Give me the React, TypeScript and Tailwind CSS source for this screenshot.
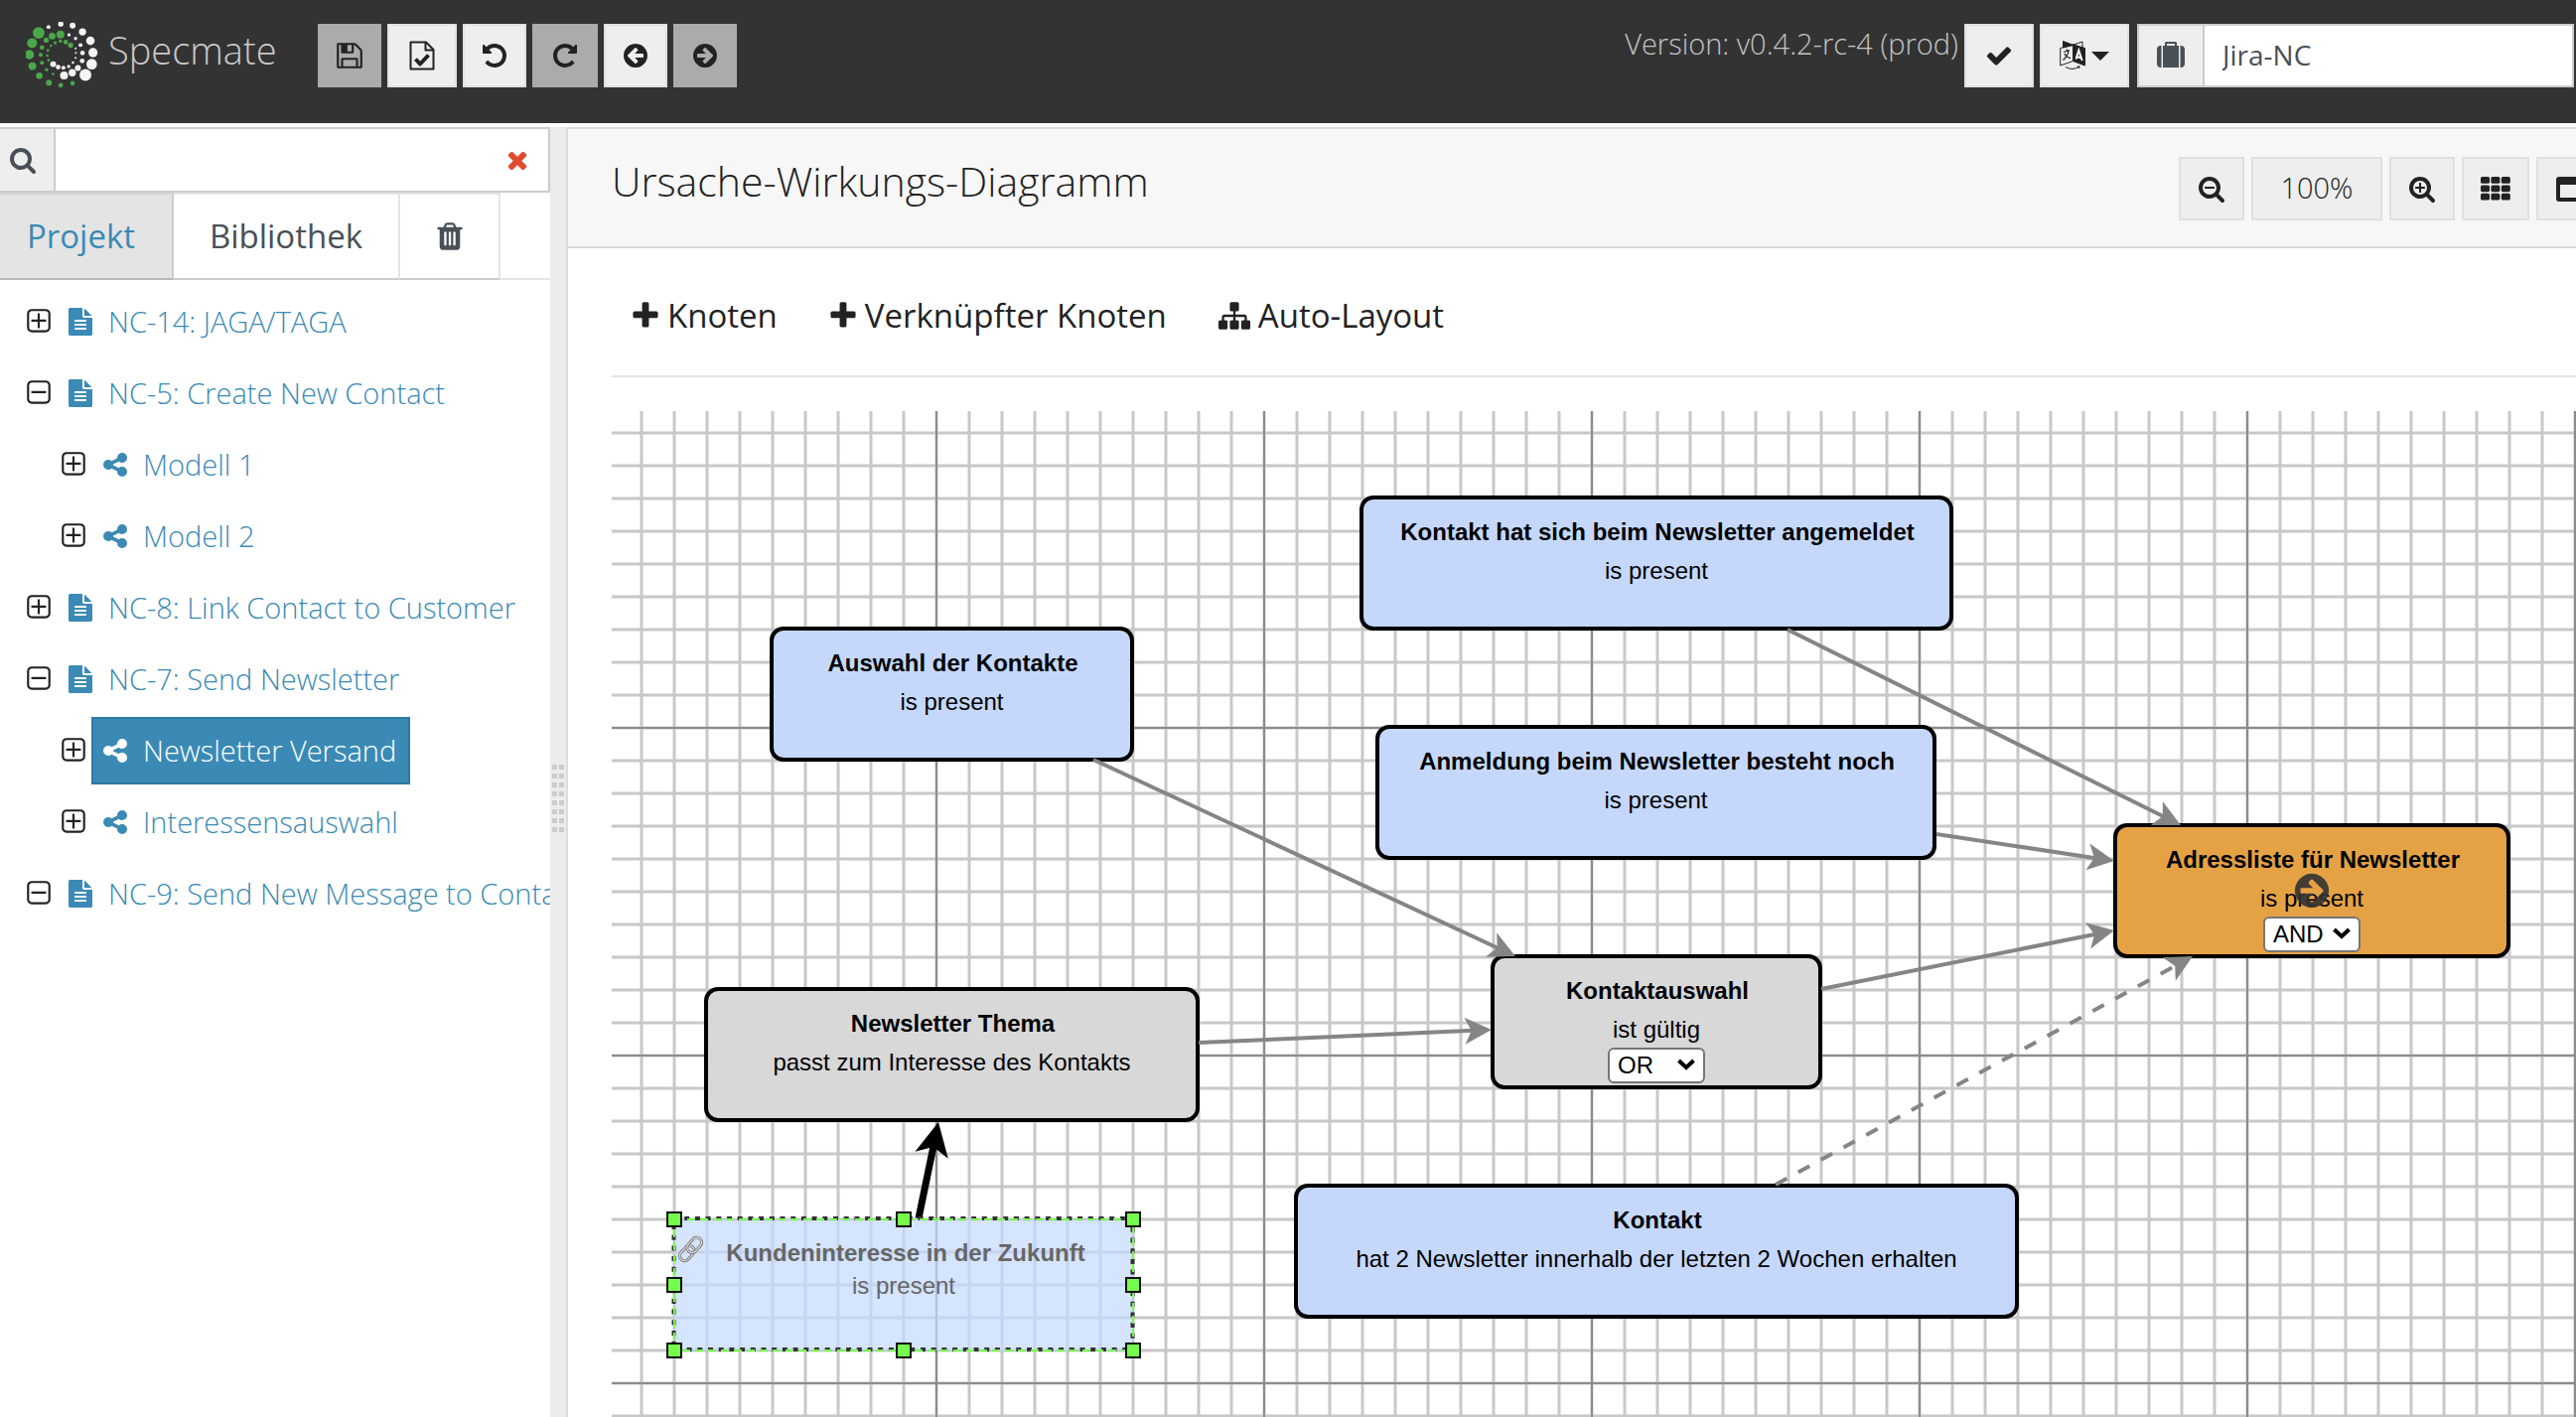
import React from "react";

const ICONS = {
  search:
    "M1216 832q0-185-131.5-316.5t-316.5-131.5-316.5 131.5-131.5 316.5 131.5 316.5 316.5 131.5 316.5-131.5 131.5-316.5zm512 832q0 52-38 90t-90 38q-54 0-90-38l-343-342q-179 124-399 124-143 0-273.5-55.5t-225-150-150-225-55.5-273.5 55.5-273.5 150-225 225-150 273.5-55.5 273.5 55.5 225 150 150 225 55.5 273.5q0 220-124 399l343 343q37 37 37 90z",
  minusBar:
    "M1088 800v64q0 13-9.5 22.5t-22.5 9.5h-576q-13 0-22.5-9.5t-9.5-22.5v-64q0-13 9.5-22.5t22.5-9.5h576q13 0 22.5 9.5t9.5 22.5z",
  plusBar:
    "M1088 800v64q0 13-9.5 22.5t-22.5 9.5h-224v224q0 13-9.5 22.5t-22.5 9.5h-64q-13 0-22.5-9.5t-9.5-22.5v-224h-224q-13 0-22.5-9.5t-9.5-22.5v-64q0-13 9.5-22.5t22.5-9.5h224v-224q0-13 9.5-22.5t22.5-9.5h64q13 0 22.5 9.5t9.5 22.5v224h224q13 0 22.5 9.5t9.5 22.5z",
  plus: "M1600 736v192q0 40-28 68t-68 28h-416v416q0 40-28 68t-68 28h-192q-40 0-68-28t-28-68v-416h-416q-40 0-68-28t-28-68v-192q0-40 28-68t68-28h416v-416q0-40 28-68t68-28h192q40 0 68 28t28 68v416h416q40 0 68 28t28 68z",
  check:
    "M1671 566q0 40-28 68l-724 724-136 136q-28 28-68 28t-68-28l-136-136-362-362q-28-28-28-68t28-68l136-136q28-28 68-28t68 28l294 295 656-657q28-28 68-28t68 28l136 136q28 28 28 68z",
  undo: "M1664 896q0 156-61 298t-164 245-245 164-298 61q-172 0-327-72.5t-264-204.5q-7-10-6.5-22.5t8.5-20.5l137-138q10-9 25-9 16 2 23 12 73 95 179 147t225 52q104 0 198.5-40.5t163.5-109.5 109.5-163.5 40.5-198.5-40.5-198.5-109.5-163.5-163.5-109.5-198.5-40.5q-98 0-188 35.5t-160 101.5l137 138q31 30 14 69-17 40-59 40h-448q-26 0-45-19t-19-45v-448q0-42 40-59 39-17 69 14l130 129q107-101 244.5-156.5t284.5-55.5q156 0 298 61t245 164 164 245 61 298z",
  redo: "M1664 256v448q0 26-19 45t-45 19h-448q-42 0-59-40-17-39 14-69l138-138q-148-137-349-137-104 0-198.5 40.5t-163.5 109.5-109.5 163.5-40.5 198.5 40.5 198.5 109.5 163.5 163.5 109.5 198.5 40.5q119 0 225-52t179-147q7-10 23-12 15 0 25 9l137 138q9 8 9.5 20.5t-7.5 22.5q-109 132-264 204.5t-327 72.5q-156 0-298-61t-245-164-164-245-61-298 61-298 164-245 245-164 298-61q147 0 284.5 55.5t244.5 156.5l130-129q29-31 70-14 39 17 39 59z",
  circleRight:
    "M1413 896q0-27-18-45l-91-91-362-362q-18-18-45-18t-45 18l-91 91q-18 18-18 45t18 45l189 189h-502q-26 0-45 19t-19 45v128q0 26 19 45t45 19h502l-189 189q-19 19-19 45t19 45l91 91q18 18 45 18t45-18l362-362 91-91q18-18 18-45zm251 0q0 209-103 385.5t-279.5 279.5-385.5 103-385.5-103-279.5-279.5-103-385.5 103-385.5 279.5-279.5 385.5-103 385.5 103 279.5 279.5 103 385.5z",
  squareFrame:
    "M1472 1248v-832q0-66-47-113t-113-47h-832q-66 0-113 47t-47 113v832q0 66 47 113t113 47h832q66 0 113-47t47-113zm128-832v832q0 119-84.5 203.5t-203.5 84.5h-832q-119 0-203.5-84.5t-84.5-203.5v-832q0-119 84.5-203.5t203.5-84.5h832q119 0 203.5 84.5t84.5 203.5z",
  squarePlus:
    "M1344 800v64q0 14-9 23t-23 9h-352v352q0 14-9 23t-23 9h-64q-14 0-23-9t-9-23v-352h-352q-14 0-23-9t-9-23v-64q0-14 9-23t23-9h352v-352q0-14 9-23t23-9h64q14 0 23 9t9 23v352h352q14 0 23 9t9 23z",
  squareMinus:
    "M1344 800v64q0 14-9 23t-23 9h-832q-14 0-23-9t-9-23v-64q0-14 9-23t23-9h832q14 0 23 9t9 23z",
  share:
    "M1344 1024q133 0 226.5 93.5t93.5 226.5-93.5 226.5-226.5 93.5-226.5-93.5-93.5-226.5q0-12 2-34l-360-180q-92 86-218 86-133 0-226.5-93.5t-93.5-226.5 93.5-226.5 226.5-93.5q126 0 218 86l360-180q-2-22-2-34 0-133 93.5-226.5t226.5-93.5 226.5 93.5 93.5 226.5-93.5 226.5-226.5 93.5q-126 0-218-86l-360 180q2 22 2 34t-2 34l360 180q92-86 218-86z",
  trash:
    "M704 1376v-704q0-14-9-23t-23-9h-64q-14 0-23 9t-9 23v704q0 14 9 23t23 9h64q14 0 23-9t9-23zm256 0v-704q0-14-9-23t-23-9h-64q-14 0-23 9t-9 23v704q0 14 9 23t23 9h64q14 0 23-9t9-23zm256 0v-704q0-14-9-23t-23-9h-64q-14 0-23 9t-9 23v704q0 14 9 23t23 9h64q14 0 23-9t9-23zm-544-992h448l-48-117q-7-9-17-11h-317q-10 2-17 11zm928 32v64q0 14-9 23t-23 9h-96v948q0 83-47 143.5t-113 60.5h-832q-66 0-113-58.5t-47-141.5v-952h-96q-14 0-23-9t-9-23v-64q0-14 9-23t23-9h309l70-167q15-37 54-63t79-26h320q40 0 79 26t54 63l70 167h309q14 0 23 9t9 23z",
  file: "M1596 476q14 14 28 36h-472v-472q22 14 36 28zm-476 164h544v1056q0 40-28 68t-68 28h-1344q-40 0-68-28t-28-68v-1600q0-40 28-68t68-28h800v544q0 40 28 68t68 28zm160 736v-64q0-14-9-23t-23-9h-704q-14 0-23 9t-9 23v64q0 14 9 23t23 9h704q14 0 23-9t9-23zm0-256v-64q0-14-9-23t-23-9h-704q-14 0-23 9t-9 23v64q0 14 9 23t23 9h704q14 0 23-9t9-23zm0-256v-64q0-14-9-23t-23-9h-704q-14 0-23 9t-9 23v64q0 14 9 23t23 9h704q14 0 23-9t9-23z",
  save: "M512 1536h768v-384h-768v384zm896 0h128v-896q0-14-10-38.5t-20-34.5l-281-281q-10-10-34-20t-39-10v416q0 40-28 68t-68 28h-576q-40 0-68-28t-28-68v-416h-128v1280h128v-416q0-40 28-68t68-28h832q40 0 68 28t28 68v416zm-384-928v-320q0-13-9.5-22.5t-22.5-9.5h-192q-13 0-22.5 9.5t-9.5 22.5v320q0 13 9.5 22.5t22.5 9.5h192q13 0 22.5-9.5t9.5-22.5zm640 32v928q0 40-28 68t-68 28h-1344q-40 0-68-28t-28-68v-1344q0-40 28-68t68-28h928q40 0 88 20t76 48l280 280q28 28 48 76t20 88z",
  sitemap:
    "M1792 1248v320q0 40-28 68t-68 28h-320q-40 0-68-28t-28-68v-320q0-40 28-68t68-28h96v-192h-512v192h96q40 0 68 28t28 68v320q0 40-28 68t-68 28h-320q-40 0-68-28t-28-68v-320q0-40 28-68t68-28h96v-192h-512v192h96q40 0 68 28t28 68v320q0 40-28 68t-68 28h-320q-40 0-68-28t-28-68v-320q0-40 28-68t68-28h96v-192q0-52 38-90t90-38h512v-192h-96q-40 0-68-28t-28-68v-320q0-40 28-68t68-28h320q40 0 68 28t28 68v320q0 40-28 68t-68 28h-96v192h512q52 0 90 38t38 90v192h96q40 0 68 28t28 68z",
  suitcase:
    "M640 256h512v-128h-512v128zm-352 0v1408h-64q-92 0-158-66t-66-158v-960q0-92 66-158t158-66h64zm1120 0v1408h-1024v-1408h128v-160q0-40 28-68t68-28h576q40 0 68 28t28 68v160h128zm384 224v960q0 92-66 158t-158 66h-64v-1408h64q92 0 158 66t66 158z",
  close:
    "M1490 1322q0 40-28 68l-136 136q-28 28-68 28t-68-28l-294-294-294 294q-28 28-68 28t-68-28l-136-136q-28-28-28-68t28-68l294-294-294-294q-28-28-28-68t28-68l136-136q28-28 68-28t68 28l294 294 294-294q28-28 68-28t68 28l136 136q28 28 28 68t-28 68l-294 294 294 294q28 28 28 68z",
};

type IconName = keyof typeof ICONS;

function Icon({ parts, className = "size-7", flip = false }: { parts: IconName[]; className?: string; flip?: boolean }) {
  return (
    <svg viewBox="0 0 1792 1792" className={`shrink-0 ${className}`} fill="currentColor" aria-hidden="true">
      <g transform={flip ? "translate(1792 0) scale(-1 1)" : undefined}>
        {parts.map((p) => (
          <path key={p} d={ICONS[p]} />
        ))}
      </g>
    </svg>
  );
}

function GridIcon() {
  return (
    <svg viewBox="0 0 30 24" className="h-6 w-[30px]" fill="currentColor" aria-hidden="true">
      {[0, 1, 2].map((r) =>
        [0, 1, 2].map((c) => <rect key={`${r}${c}`} x={c * 10.4} y={r * 8.4} width="9" height="6.8" rx="1.6" />)
      )}
    </svg>
  );
}

function CheckedFileIcon() {
  return (
    <svg viewBox="0 0 26 30" className="h-[30px] w-[26px]" fill="none" stroke="currentColor" strokeWidth="2" strokeLinejoin="round" aria-hidden="true">
      <path d="M1.5 1.5H17L24.5 9V28.5H1.5Z" />
      <path d="M16.5 1.5V9.5H24.5" />
      <path d="M6.5 18.5L11 23.5L19.5 14.5" strokeWidth="4" />
    </svg>
  );
}

function WindowIcon() {
  return (
    <svg viewBox="0 0 28 25" className="h-[25px] w-7" aria-hidden="true">
      <path fill="currentColor" fillRule="evenodd" d="M3 0H25Q28 0 28 3V22Q28 25 25 25H3Q0 25 0 22V3Q0 0 3 0ZM4 8V21H24V8Z" />
    </svg>
  );
}

function LanguageIcon() {
  return (
    <svg viewBox="0 0 26 30" className="h-[30px] w-[26px]" fill="none" stroke="currentColor" strokeWidth="1" aria-hidden="true">
      <path d="M3.5 0.5L14 4.5L3.5 7Z" fill="currentColor" />
      <path d="M14 4L23 1V7" />
      <path d="M0.7 7.5L13.5 3.8V20.5L0.7 25Z" />
      <path d="M13.5 3.8L25.5 7.5V25L13.5 20.5Z" fill="currentColor" />
      <path d="M4 11.5L10 9.5M7 8.5L7.5 10.3M9 10Q8 16 3.5 19.5M5 13Q7 17 11 17.5" strokeWidth="1.3" />
      <path d="M16.5 18.5L19.3 9.8L22.7 20M17.3 16.2L21.8 17.3" stroke="#fff" strokeWidth="2" />
      <path d="M6 26.5Q13 30.5 20 26M17.5 26H20.3L19 28" />
    </svg>
  );
}

const LOGO_DOTS: [number, number, number, "g" | "w"][] = [
  [39, 33, 18, "g"], [19, 64, 15, "g"], [11, 99, 14, "g"], [20, 134, 12, "g"], [41, 163, 10, "g"], [70, 184, 9, "g"],
  [106, 192, 7, "g"], [142, 186, 7, "g"], [69, 15, 6, "w"], [106, 6, 8, "w"], [142, 11, 9, "w"], [172, 30, 11, "w"],
  [196, 57, 13, "w"], [204, 93, 14, "w"], [200, 128, 16, "w"], [181, 161, 18, "w"], [80, 43, 10, "g"], [105, 38, 12, "g"],
  [62, 55, 8, "g"], [49, 77, 7, "g"], [45, 100, 6, "g"], [49, 124, 6, "g"], [63, 145, 5, "g"], [83, 158, 4, "g"],
  [131, 39, 5, "w"], [151, 50, 5, "w"], [166, 70, 6, "w"], [172, 94, 7, "w"], [171, 118, 7, "w"], [158, 140, 9, "w"],
  [141, 154, 11, "w"], [116, 162, 12, "w"], [83, 128, 9, "w"], [98, 137, 7, "w"], [114, 139, 6, "w"], [130, 135, 5, "w"],
  [143, 123, 4, "w"], [151, 109, 3, "w"], [152, 94, 3, "w"], [151, 80, 3, "w"], [136, 70, 8, "g"], [121, 61, 7, "g"],
  [105, 58, 5, "g"], [89, 63, 5, "g"], [76, 72, 4, "g"], [67, 86, 4, "g"], [65, 102, 4, "g"], [69, 116, 4, "g"],
];

function LogoMark() {
  return (
    <svg viewBox="0 0 220 198" className="h-[66px] w-[73px] shrink-0" aria-hidden="true">
      {LOGO_DOTS.map(([x, y, r, tone]) => (
        <circle key={`${x}-${y}`} cx={x} cy={y} r={r} fill={tone === "g" ? "#4aa84a" : "#f4f4f4"} />
      ))}
    </svg>
  );
}

function HeaderButton({ label, muted = false, className = "w-16", children }: { label: string; muted?: boolean; className?: string; children: React.ReactNode }) {
  return (
    <button
      type="button"
      aria-label={label}
      className={`flex h-16 shrink-0 items-center justify-center border-2 text-[#222] ${muted ? "border-[#ababab] bg-[#ababab]" : "border-[#e0e0e0] bg-[#eee]"} ${className}`}
    >
      {children}
    </button>
  );
}

function Header() {
  return (
    <header className="flex h-[124px] shrink-0 items-start bg-[#333] pt-6">
      <a href="#home" className="-mt-0.5 ml-[26px] flex w-[294px] items-center gap-2.5 text-[38px] font-light leading-none text-[#c8c8c8]">
        <LogoMark />
        <span className="-mt-2.5">Specmate</span>
      </a>
      <div className="flex gap-1.5">
        <HeaderButton label="Speichern" muted><Icon parts={["save"]} className="size-[30px]" /></HeaderButton>
        <HeaderButton label="Prüfen" className="w-[70px]"><CheckedFileIcon /></HeaderButton>
        <HeaderButton label="Rückgängig"><Icon parts={["undo"]} /></HeaderButton>
        <HeaderButton label="Wiederholen" muted className="w-[66px]"><Icon parts={["redo"]} /></HeaderButton>
        <HeaderButton label="Zurück"><Icon parts={["circleRight"]} flip /></HeaderButton>
        <HeaderButton label="Vor" muted><Icon parts={["circleRight"]} /></HeaderButton>
      </div>
      <div className="ml-auto flex items-start pr-0.5">
        <span className="mr-1.5 text-[29px] font-light leading-10 text-[#c4c4c4]">Version: v0.4.2-rc-4 (prod)</span>
        <HeaderButton label="Verbunden" className="mr-1.5 w-[70px]"><Icon parts={["check"]} /></HeaderButton>
        <HeaderButton label="Sprache" className="mr-2 w-[90px] gap-1.5">
          <LanguageIcon />
          <svg viewBox="0 0 18 9" className="h-[9px] w-[18px]" aria-hidden="true"><path d="M0 0H18L9 9Z" fill="currentColor" /></svg>
        </HeaderButton>
        <label className="flex h-16 w-[440px] border-2 border-[#ccc] bg-white text-[#495057]">
          <span className="flex w-[66px] items-center justify-center border-r-2 border-[#ccc] bg-[#eee]"><Icon parts={["suitcase"]} /></span>
          <input aria-label="Projekt" defaultValue="Jira-NC" className="min-w-0 flex-1 px-[18px] pb-0.5 text-[28px] outline-none" />
        </label>
      </div>
    </header>
  );
}

type TreeRow = { label: string; level: 0 | 1; open?: boolean; selected?: boolean };

const TREE: TreeRow[] = [
  { label: "NC-14: JAGA/TAGA", level: 0 },
  { label: "NC-5: Create New Contact", level: 0, open: true },
  { label: "Modell 1", level: 1 },
  { label: "Modell 2", level: 1 },
  { label: "NC-8: Link Contact to Customer", level: 0 },
  { label: "NC-7: Send Newsletter", level: 0, open: true },
  { label: "Newsletter Versand", level: 1, selected: true },
  { label: "Interessensauswahl", level: 1 },
  { label: "NC-9: Send New Message to Conta", level: 0, open: true },
];

function Sidebar() {
  return (
    <aside className="flex w-[554px] shrink-0 flex-col overflow-hidden bg-white">
      <div className="flex h-[66px] shrink-0 border-y-2 border-r-2 border-[#ccc] text-[#495057]">
        <button type="button" aria-label="Suchen" className="flex w-14 shrink-0 items-center border-r-2 border-[#ccc] bg-[#eee] pl-[9px]">
          <Icon parts={["search"]} />
        </button>
        <input aria-label="Suche" className="min-w-0 flex-1 px-4 text-[28px] outline-none" />
        <button type="button" aria-label="Suche leeren" className="mr-[17px] flex items-center text-[#e04b2f]"><Icon parts={["close"]} /></button>
      </div>
      <div role="tablist" className="flex h-[88px] shrink-0 border-b-2 border-[#e4e4e4] text-[33px] text-[#495057]">
        <button role="tab" aria-selected="true" type="button" className="-mb-0.5 w-[175px] border-b-2 border-r-2 border-t-2 border-b-[#b8b8b8] border-r-[#ccc] border-t-[#d4d4d4] bg-[#e4e4e4] pr-2.5 text-[#3a8ab5]">Projekt</button>
        <button role="tab" aria-selected="false" type="button" className="-mb-0.5 w-[228px] border-b-2 border-r-2 border-t-2 border-b-[#ccc] border-r-[#e4e4e4] border-t-[#e4e4e4]">Bibliothek</button>
        <button role="tab" aria-selected="false" aria-label="Papierkorb" type="button" className="-mb-0.5 flex w-[101px] items-center justify-center border-b-2 border-r-2 border-t-2 border-b-[#ccc] border-r-[#e4e4e4] border-t-[#e4e4e4]"><Icon parts={["trash"]} className="size-8" /></button>
      </div>
      <ul className="mt-2 flex flex-col gap-1 text-[29px] font-light text-[#3a8ab5]">
        {TREE.map((row) => (
          <li key={row.label} className={`flex items-center gap-[3px] ${row.level === 0 ? "pl-6" : "pl-[59px]"}`}>
            <button type="button" aria-label={row.open ? "Zuklappen" : "Aufklappen"} className="text-[#222]">
              <Icon parts={["squareFrame", row.open ? "squareMinus" : "squarePlus"]} className="size-[30px]" />
            </button>
            <a
              href="#item"
              className={`flex h-[68px] items-center whitespace-nowrap border-2 pl-2 pr-3 ${row.selected ? "border-[#2d7aa3] bg-[#3a8ab5] text-white" : "border-transparent"}`}
            >
              <Icon parts={[row.level === 0 ? "file" : "share"]} />
              <span className="ml-3.5">{row.label}</span>
            </a>
          </li>
        ))}
      </ul>
    </aside>
  );
}

function Gutter() {
  return (
    <div role="separator" className="flex w-4 shrink-0 flex-col items-center bg-[#ececec] pt-[642px]">
      <div className="grid grid-cols-2 gap-x-0.5 gap-y-1">
        {Array.from({ length: 16 }, (_, i) => (
          <span key={i} className="h-[5px] w-[5px] bg-[#ccc]" />
        ))}
      </div>
    </div>
  );
}

type Point = [number, number];
type Edge = { from: Point; to: Point; dashed?: boolean; strong?: boolean };

const EDGES: Edge[] = [
  { from: [485, 351], to: [910, 549] },
  { from: [1184, 220], to: [1580, 417] },
  { from: [1334, 426], to: [1513, 453] },
  { from: [1218, 582], to: [1513, 523] },
  { from: [591, 636], to: [886, 623] },
  { from: [1172, 779], to: [1592, 549], dashed: true },
  { from: [309, 813], to: [329, 716], strong: true },
];

function EdgeShape({ from, to, dashed, strong }: Edge) {
  const len = Math.hypot(to[0] - from[0], to[1] - from[1]);
  const ux = (to[0] - from[0]) / len;
  const uy = (to[1] - from[1]) / len;
  const size = strong ? 34 : 27;
  const half = strong ? 17 : 13.5;
  const at = (back: number, side: number) => `${to[0] - ux * back - uy * side},${to[1] - uy * back + ux * side}`;
  const color = strong ? "#000" : "#858585";
  return (
    <g fill={color} stroke="none">
      <line
        x1={from[0]}
        y1={from[1]}
        x2={to[0] - ux * size * 0.7}
        y2={to[1] - uy * size * 0.7}
        stroke={color}
        strokeWidth={strong ? 7 : 4}
        strokeDasharray={dashed ? "13 13" : undefined}
      />
      <polygon points={`${at(0, 0)} ${at(size, half)} ${at(size * 0.75, 0)} ${at(size, -half)}`} />
    </g>
  );
}

function NodeBox({ title, text, operator, className, children }: { title: string; text: string; operator?: string; className: string; children?: React.ReactNode }) {
  return (
    <div className={`absolute flex h-[136px] flex-col items-center rounded-[14px] border-4 border-black pt-[13px] text-[24px] leading-[39px] text-black ${className}`}>
      <div className="whitespace-nowrap pl-0.5 font-bold">{title}</div>
      <div className="whitespace-nowrap">{text}</div>
      {operator && (
        <div className="relative -mt-[3px] h-9 w-[98px]">
          <select aria-label={`Verknüpfung ${title}`} defaultValue={operator} className="size-full appearance-none rounded-md border-2 border-[#767676] bg-white pl-2 leading-8">
            <option>AND</option>
            <option>OR</option>
          </select>
          <svg viewBox="0 0 18 12" className="pointer-events-none absolute right-2.5 top-[13px] h-3 w-[18px]" fill="none" stroke="#000" strokeWidth="4" aria-hidden="true">
            <path d="M1.5 2L9 9L16.5 2" />
          </svg>
        </div>
      )}
      {children}
    </div>
  );
}

function SelectedNode() {
  const xs = [8, 239, 470];
  const ys = [8, 74, 140];
  return (
    <div className="absolute left-[55px] top-[806px] h-[148px] w-[478px]">
      <svg viewBox="0 0 478 148" className="absolute inset-0 size-full" fill="none" aria-hidden="true">
        <rect x="8" y="8" width="462" height="132" fill="#c3d9ff" fillOpacity="0.7" />
        <rect x="7.5" y="7" width="462" height="132" stroke="#333" strokeWidth="4" strokeDasharray="5 5.7" />
        <rect x="8" y="8" width="462" height="132" stroke="#75fb4c" strokeWidth="2" strokeDasharray="8 5" />
        {ys.map((y, r) =>
          xs.map((x, c) => (r === 1 && c === 1 ? null : <rect key={`${x}-${y}`} x={x - 7} y={y - 7} width="14" height="14" fill="#75fb4c" stroke="#111" strokeWidth="2" />))
        )}
        <g transform="translate(24.5 38) rotate(-48)">
          <rect x="-14" y="-5" width="17" height="10" rx="5" stroke="#777" strokeWidth="3" />
          <rect x="-14" y="-5" width="17" height="10" rx="5" stroke="#eee" strokeWidth="1" />
          <rect x="-3" y="-5" width="17" height="10" rx="5" stroke="#777" strokeWidth="3" />
          <rect x="-3" y="-5" width="17" height="10" rx="5" stroke="#eee" strokeWidth="1" />
        </g>
      </svg>
      <div className="relative flex flex-col items-center pt-[25px] text-[24px] leading-[33px] text-[#666]">
        <div className="whitespace-nowrap pl-1 font-bold">Kundeninteresse in der Zukunft</div>
        <div className="whitespace-nowrap">is present</div>
      </div>
    </div>
  );
}

function Canvas() {
  return (
    <div className="relative ml-11 flex-1 overflow-hidden font-[Liberation_Sans,Arial,sans-serif]">
      <svg className="absolute inset-0 size-full" aria-hidden="true">
        <defs>
          <pattern id="minor" width="33" height="33" x="14" y="6" patternUnits="userSpaceOnUse">
            <path d="M16 0V33M0 16H33" stroke="#c8c8c8" strokeWidth="3" />
          </pattern>
          <pattern id="major" width="330" height="330" x="162" y="154" patternUnits="userSpaceOnUse">
            <path d="M165 0V330M0 165H330" stroke="#8c8c8c" strokeWidth="2" />
          </pattern>
        </defs>
        <rect width="100%" height="100%" fill="url(#minor)" />
        <rect width="100%" height="100%" fill="url(#major)" />
      </svg>
      <NodeBox title="Auswahl der Kontakte" text="is present" className="left-[159px] top-[217px] w-[367px] bg-[#c5d8fc]" />
      <NodeBox title="Kontakt hat sich beim Newsletter angemeldet" text="is present" className="left-[753px] top-[85px] w-[598px] bg-[#c5d8fc]" />
      <NodeBox title="Anmeldung beim Newsletter besteht noch" text="is present" className="left-[769px] top-[316px] w-[565px] bg-[#c5d8fc]" />
      <NodeBox title="Newsletter Thema" text="passt zum Interesse des Kontakts" className="left-[93px] top-[580px] w-[499px] bg-[#d8d8d8]" />
      <NodeBox title="Kontaktauswahl" text="ist gültig" operator="OR" className="left-[885px] top-[547px] w-[334px] bg-[#d8d8d8]" />
      <NodeBox title="Kontakt" text="hat 2 Newsletter innerhalb der letzten 2 Wochen erhalten" className="left-[687px] top-[778px] w-[730px] bg-[#c5d8fc]" />
      <NodeBox title="Adressliste für Newsletter" text="is present" operator="AND" className="left-[1512px] top-[415px] w-[400px] bg-[#e5a245]">
        <div className="absolute inset-0 flex items-center justify-center text-[#333] opacity-90">
          <Icon parts={["circleRight"]} className="size-10" />
        </div>
      </NodeBox>
      <svg className="pointer-events-none absolute inset-0 size-full" aria-hidden="true">
        {EDGES.map((e) => (
          <EdgeShape key={e.from.join()} {...e} />
        ))}
      </svg>
      <SelectedNode />
    </div>
  );
}

function ToolButton({ label, className = "w-[66px]", children }: { label: string; className?: string; children: React.ReactNode }) {
  return (
    <button type="button" aria-label={label} className={`flex h-16 shrink-0 items-center justify-center border-2 border-[#e0e0e0] bg-[#eee] text-[29px] font-light text-[#222] ${className}`}>
      {children}
    </button>
  );
}

function Editor() {
  return (
    <main className="flex min-w-0 flex-1 flex-col overflow-hidden border-l-2 border-[#ddd] bg-white text-[#222]">
      <div className="flex h-[122px] shrink-0 items-start border-b-2 border-t-2 border-b-[#d8d8d8] border-t-[#ddd] bg-[#f7f7f7] pl-11 pt-7">
        <h1 className="-mt-1.5 text-[41px] font-light leading-[60px]">Ursache-Wirkungs-Diagramm</h1>
        <div className="-mr-7 ml-auto flex gap-[7px]">
          <ToolButton label="Verkleinern"><Icon parts={["search", "minusBar"]} /></ToolButton>
          <ToolButton label="Zoom zurücksetzen" className="w-[132px] pb-0.5">100%</ToolButton>
          <ToolButton label="Vergrößern"><Icon parts={["search", "plusBar"]} /></ToolButton>
          <ToolButton label="Raster" className="w-[68px]"><GridIcon /></ToolButton>
          <ToolButton label="Vollbild" className="w-[68px]"><WindowIcon /></ToolButton>
        </div>
      </div>
      <div className="ml-11 flex h-[130px] shrink-0 items-center gap-[50px] border-b-2 border-[#e4e4e4] pl-[18px] pt-2 text-[33px]">
        <button type="button" className="flex items-center gap-1.5"><Icon parts={["plus"]} className="size-8" />Knoten</button>
        <button type="button" className="flex items-center gap-1.5"><Icon parts={["plus"]} className="size-8" />Verknüpfter Knoten</button>
        <button type="button" className="ml-0.5 flex items-center gap-2"><Icon parts={["sitemap"]} className="size-8" />Auto-Layout</button>
      </div>
      <div className="h-[34px] shrink-0" />
      <Canvas />
    </main>
  );
}

export default function App() {
  return (
    <div className="flex h-screen flex-col overflow-hidden bg-white font-[Open_Sans,sans-serif]">
      <Header />
      <div className="mt-1 flex min-h-0 flex-1">
        <Sidebar />
        <Gutter />
        <Editor />
      </div>
    </div>
  );
}
